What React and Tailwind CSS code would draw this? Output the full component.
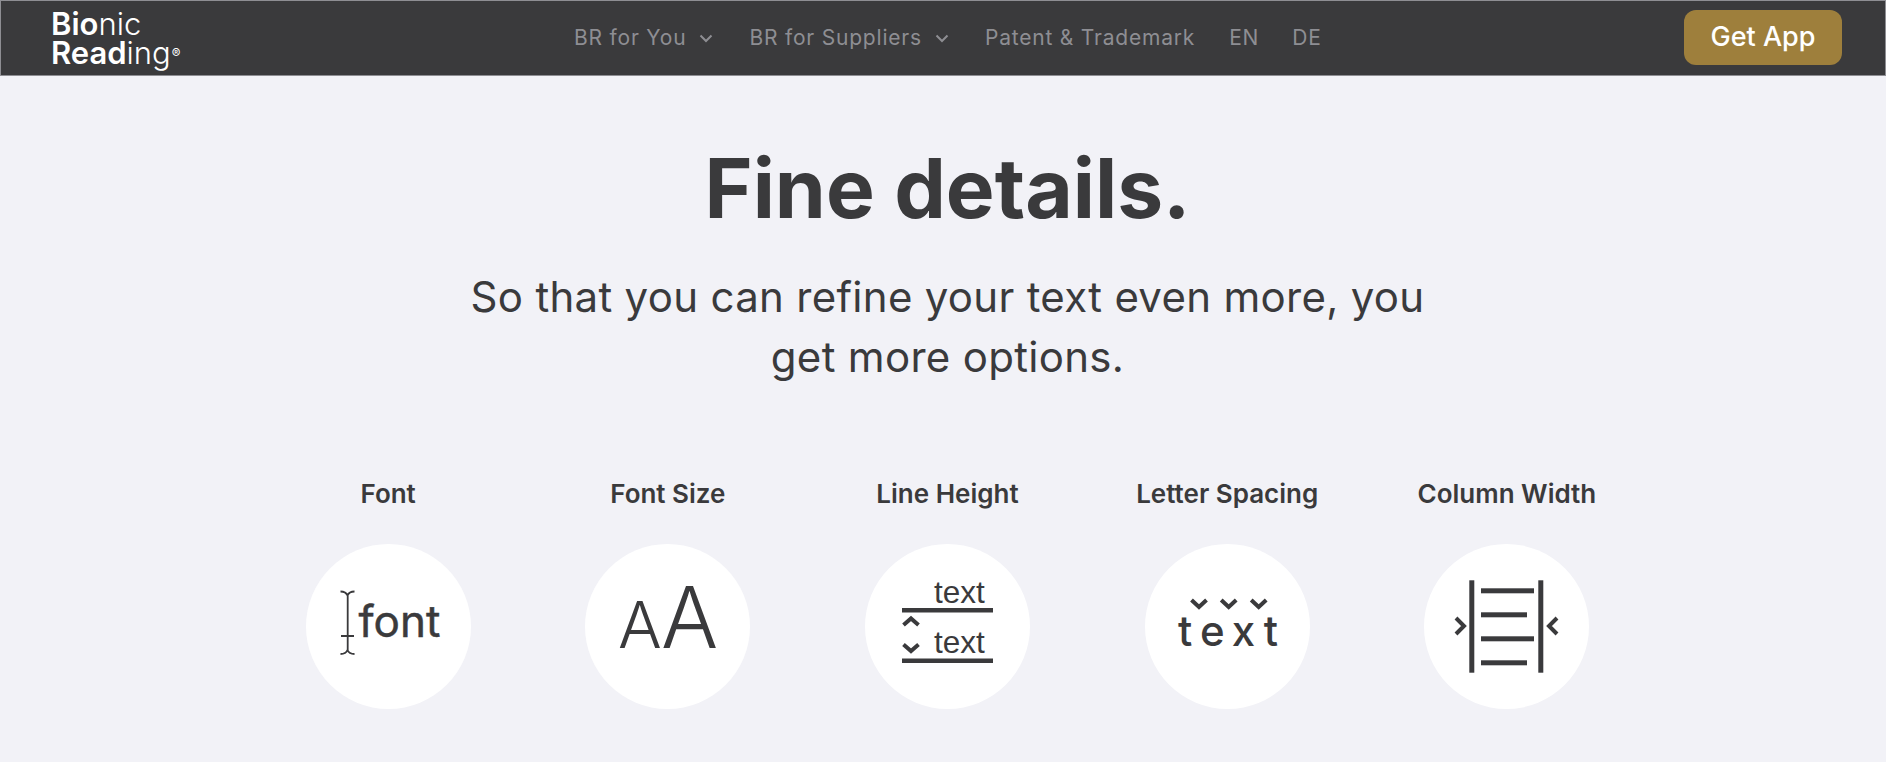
const inter = { fontFamily: 'Inter, sans-serif' };
const arial = { fontFamily: '"Liberation Sans", sans-serif' };

function Chevron({ d, width = 4 }) {
  return <path d={d} fill="none" stroke="#3a3a3c" strokeWidth={width} />;
}

function NavChevron() {
  return (
    <svg width="14" height="9" viewBox="0 0 14 9" className="ml-[13px]">
      <path d="M1.500 1.500l5.500 5.500 5.500-5.500" fill="none" stroke="#8e8e93" strokeWidth="2" />
    </svg>
  );
}

function FontIcon() {
  return (
    <svg width="165" height="165" viewBox="0 0 165 165">
      <path d="M34.500 47.500c3.500 0 6 1.500 7 4 1-2.500 3.500-4 7-4M41.700 51v55M34.500 110c3.500 0 6-1.500 7-4 1 2.500 3.500 4 7 4M35 92h13" fill="none" stroke="#3a3a3c" strokeWidth="1.800" />
      <text x="52.500" y="93" fontSize="44" fill="#3a3a3c" stroke="#3a3a3c" strokeWidth="0.5" style={inter}>font</text>
    </svg>
  );
}

function SizeIcon() {
  return (
    <svg width="165" height="165" viewBox="0 0 165 165">
      <text x="33" y="104" fontSize="65" fontWeight="300" fill="#3a3a3c" style={inter}>A</text>
      <text x="76" y="104" fontSize="85" fontWeight="300" fill="#3a3a3c" style={inter}>A</text>
    </svg>
  );
}

function LineHeightIcon() {
  return (
    <svg width="165" height="165" viewBox="0 0 165 165">
      <text x="69" y="59" fontSize="31.500" fill="#3a3a3c" style={arial}>text</text>
      <rect x="37" y="64" width="91" height="4.500" fill="#3a3a3c" />
      <Chevron d="M38.500 81l7.500-6.500 7.500 6.500" />
      <Chevron d="M38.500 100.500l7.500 6.500 7.500-6.500" />
      <text x="69" y="109" fontSize="31.500" fill="#3a3a3c" style={arial}>text</text>
      <rect x="37" y="114.500" width="91" height="4.500" fill="#3a3a3c" />
    </svg>
  );
}

function SpacingIcon() {
  return (
    <svg width="165" height="165" viewBox="0 0 165 165">
      <Chevron d="M46.500 56l7.500 7 7.500-7" />
      <Chevron d="M76.200 56l7.500 7 7.500-7" />
      <Chevron d="M106.200 56l7.500 7 7.500-7" />
      <text x="33" y="102" fontSize="42" fontWeight="500" fill="#3a3a3c" style={{ ...inter, letterSpacing: '8px' }}>text</text>
    </svg>
  );
}

function WidthIcon() {
  return (
    <svg width="165" height="165" viewBox="0 0 165 165">
      <rect x="45.300" y="36.300" width="5" height="92.400" fill="#3a3a3c" />
      <rect x="114.300" y="36.300" width="5" height="92.400" fill="#3a3a3c" />
      <rect x="57" y="44.300" width="53" height="5" fill="#3a3a3c" />
      <rect x="57" y="68.300" width="46" height="5" fill="#3a3a3c" />
      <rect x="57" y="92.300" width="53" height="5" fill="#3a3a3c" />
      <rect x="57" y="116.300" width="46" height="5" fill="#3a3a3c" />
      <Chevron d="M32 74l8 8-8 8" />
      <Chevron d="M133 74l-8 8 8 8" />
    </svg>
  );
}

const options = [
  { label: 'Font', Icon: FontIcon },
  { label: 'Font Size', Icon: SizeIcon },
  { label: 'Line Height', Icon: LineHeightIcon },
  { label: 'Letter Spacing', Icon: SpacingIcon },
  { label: 'Column Width', Icon: WidthIcon },
];

export default function App() {
  return (
    <div className="h-[762px] overflow-hidden bg-[#f2f2f7] text-[#3a3a3c] font-['Inter',sans-serif]">
      <header className="relative flex h-[76px] items-center justify-between border border-[#8e8e93] bg-[#3a3a3c] pl-[50px] pr-[43px]">
        <div className="text-[31px] leading-[29px] text-white">
          <div><span className="font-semibold">Bio</span><span className="font-light">nic</span></div>
          <div>
            <span className="font-semibold">Read</span><span className="font-light">ing</span>
            <sup className="ml-[1px] text-[13px] leading-none">®</sup>
          </div>
        </div>
        <nav className="absolute left-[573px] top-0 flex h-full items-center text-[21px] tracking-[0.8px] text-[#8e8e93]">
          <span className="flex items-center">BR for You<NavChevron /></span>
          <span className="ml-[36px] flex items-center">BR for Suppliers<NavChevron /></span>
          <span className="ml-[36px]">Patent &amp; Trademark</span>
          <span className="ml-[34px]">EN</span>
          <span className="ml-[33px]">DE</span>
        </nav>
        <button className="mt-[-2px] flex h-[55px] w-[158px] items-center justify-center rounded-[12px] bg-[#9e7f3c] text-[27px] font-medium text-white">Get App</button>
      </header>
      <main className="flex flex-col items-center pl-[9px]">
        <h1 className="mt-[58px] text-[82px] leading-[110px] font-bold">Fine details.</h1>
        <p className="mt-[23px] w-[1000px] text-center text-[42px] leading-[60px] tracking-[0.3px]">So that you can refine your text even more, you<br />get more options.</p>
        <div className="mt-[92px] flex">
          {options.map(({ label, Icon }) => (
            <div key={label} className="flex w-[279.7px] flex-col items-center">
              <div className="text-[26px] leading-[30px] font-semibold">{label}</div>
              <div className="mt-[35px] h-[165px] w-[165px] rounded-full bg-white"><Icon /></div>
            </div>
          ))}
        </div>
      </main>
    </div>
  );
}
